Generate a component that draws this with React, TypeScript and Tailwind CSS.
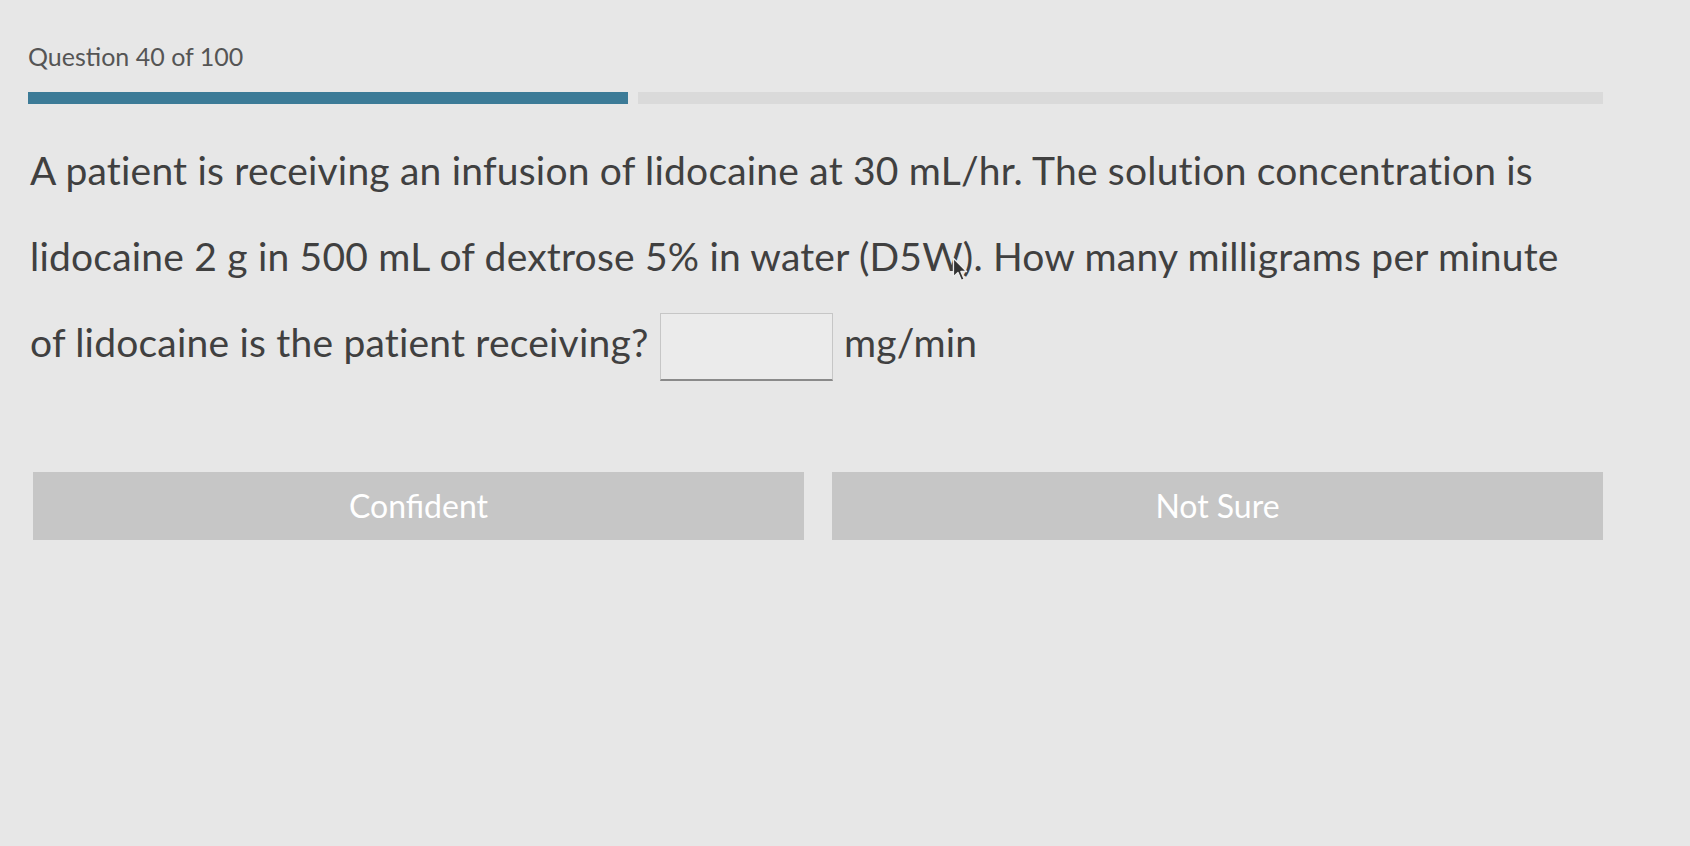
const QuestionPage = () => {
    const current = 40;
    const total = 100;

    return (
        <div
            className="h-[846px] w-full overflow-hidden bg-[#e7e7e7] pl-[28px]"
            style={{ fontFamily: "Lato, 'Open Sans', sans-serif" }}
        >
            <div className="flex w-[1575px] flex-col">
                <p className="pt-[40px] text-[25px] leading-[32px] text-[#555]">
                    Question {current} of {total}
                </p>

                <div className="mt-[20px] flex items-center gap-[10px]">
                    <div className="h-[12px] w-[600px] bg-[#3c7b97]" />
                    <div className="h-[12px] flex-1 bg-[#dadada]" />
                </div>

                <p className="mt-[23px] pl-[2px] text-[39px] leading-[86px] tracking-[0.2px] text-[#404040]">
                    A patient is receiving an infusion of lidocaine at 30 mL/hr. The solution concentration is
                    <br />
                    lidocaine 2 g in 500 mL of dextrose 5% in water (D5
                    <span className="relative">
                        W
                        {/* mouse pointer caught in the shot */}
                        <svg
                            viewBox="0 0 13 21"
                            className="absolute left-[30px] top-[24px] h-[25px] w-[16px]"
                            aria-hidden="true"
                        >
                            <path
                                d="M1 1 L1 16.5 L4.8 13 L7.6 19.6 L10 18.6 L7.2 12.2 L12 12.2 Z"
                                fill="#333"
                                stroke="#ededed"
                                strokeWidth="1.1"
                                strokeLinejoin="round"
                            />
                        </svg>
                    </span>
                    ). How many milligrams per minute
                    <br />
                    of lidocaine is the patient receiving?{" "}
                    <input
                        type="text"
                        aria-label="Answer in mg/min"
                        className="mx-[1px] inline-block h-[68px] w-[173px] border border-b-2 border-[#c6c6c6] border-b-[#8a8a8a] bg-[#ebebeb] align-middle outline-none"
                    />{" "}
                    mg/min
                </p>

                <div className="mt-[87px] grid grid-cols-2 gap-[28px] pl-[5px]">
                    <button
                        type="button"
                        className="h-[68px] bg-[#c6c6c6] text-[32px] text-white"
                    >
                        Confident
                    </button>
                    <button
                        type="button"
                        className="h-[68px] bg-[#c6c6c6] text-[32px] text-white"
                    >
                        Not Sure
                    </button>
                </div>
            </div>
        </div>
    );
};

export default function App() {
    return <QuestionPage />;
}
